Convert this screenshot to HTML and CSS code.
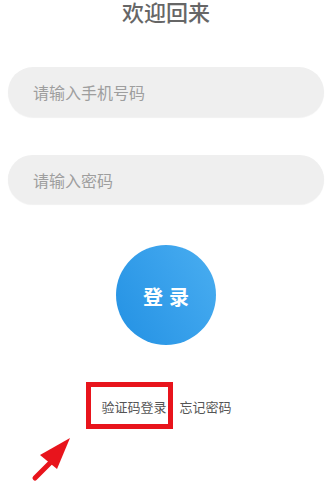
FILE: index.html
```html
<!DOCTYPE html>
<html lang="zh">
<head>
<meta charset="utf-8">
<link rel="stylesheet" href="styles.css">
</head>
<body>
<div class="page">
  <h1 class="title">欢迎回来</h1>
  <div class="field field-phone">请输入手机号码</div>
  <div class="field field-pass">请输入密码</div>
  <div class="login-btn"><span>登</span><span>录</span></div>
  <div class="links">
    <span class="link link-sms">验证码登录<span class="highlight"></span></span>
    <span class="link">忘记密码</span>
  </div>
</div>
<svg class="arrow" width="60" height="60" viewBox="0 0 60 60">
  <line x1="15" y1="53" x2="33" y2="35" stroke="#e8141c" stroke-width="5" stroke-linecap="round"/>
  <polygon points="50,13 20,30 37,44" fill="#e8141c"/>
</svg>
</body>
</html>
```
FILE: styles.css
```css
html, body {
  margin: 0;
  padding: 0;
  background: #ffffff;
}
body {
  width: 336px;
  height: 484px;
  overflow: hidden;
  position: relative;
  font-family: "Noto Sans CJK SC", "Noto Sans", sans-serif;
}
.page {
  display: flex;
  flex-direction: column;
  align-items: center;
  padding: 0 12px 0 8px;
}
.title {
  margin: 0;
  font-size: 22px;
  line-height: 22px;
  font-weight: 500;
  color: #666666;
}
.field {
  box-sizing: border-box;
  width: 316px;
  border-radius: 25px;
  background: #efefef;
  box-shadow: 0 1px 1px rgba(0, 0, 0, 0.06);
  padding-left: 25px;
  display: flex;
  align-items: center;
  font-size: 16px;
  color: #9e9e9e;
}
.field-phone {
  margin-top: 45px;
  height: 50px;
}
.field-pass {
  margin-top: 38px;
  height: 49px;
}
.login-btn {
  margin-top: 41px;
  width: 100px;
  height: 100px;
  border-radius: 50%;
  background: linear-gradient(60deg, #2391e3 0%, #3aa2ec 60%, #4aaef0 100%);
  display: flex;
  align-items: center;
  justify-content: center;
  gap: 6px;
  color: #ffffff;
  font-size: 20px;
  font-weight: 700;
  padding-top: 3px;
  box-sizing: border-box;
}
.links {
  margin-top: 52px;
  display: flex;
  gap: 13px;
  font-size: 13px;
  line-height: 20px;
  color: #555555;
  padding-left: 1px;
}
.link-sms {
  position: relative;
}
.highlight {
  position: absolute;
  left: -15px;
  top: -15px;
  width: 87px;
  height: 47px;
  box-sizing: border-box;
  border: 5px solid #e8141c;
}
.arrow {
  position: absolute;
  left: 20px;
  top: 425px;
}
```
